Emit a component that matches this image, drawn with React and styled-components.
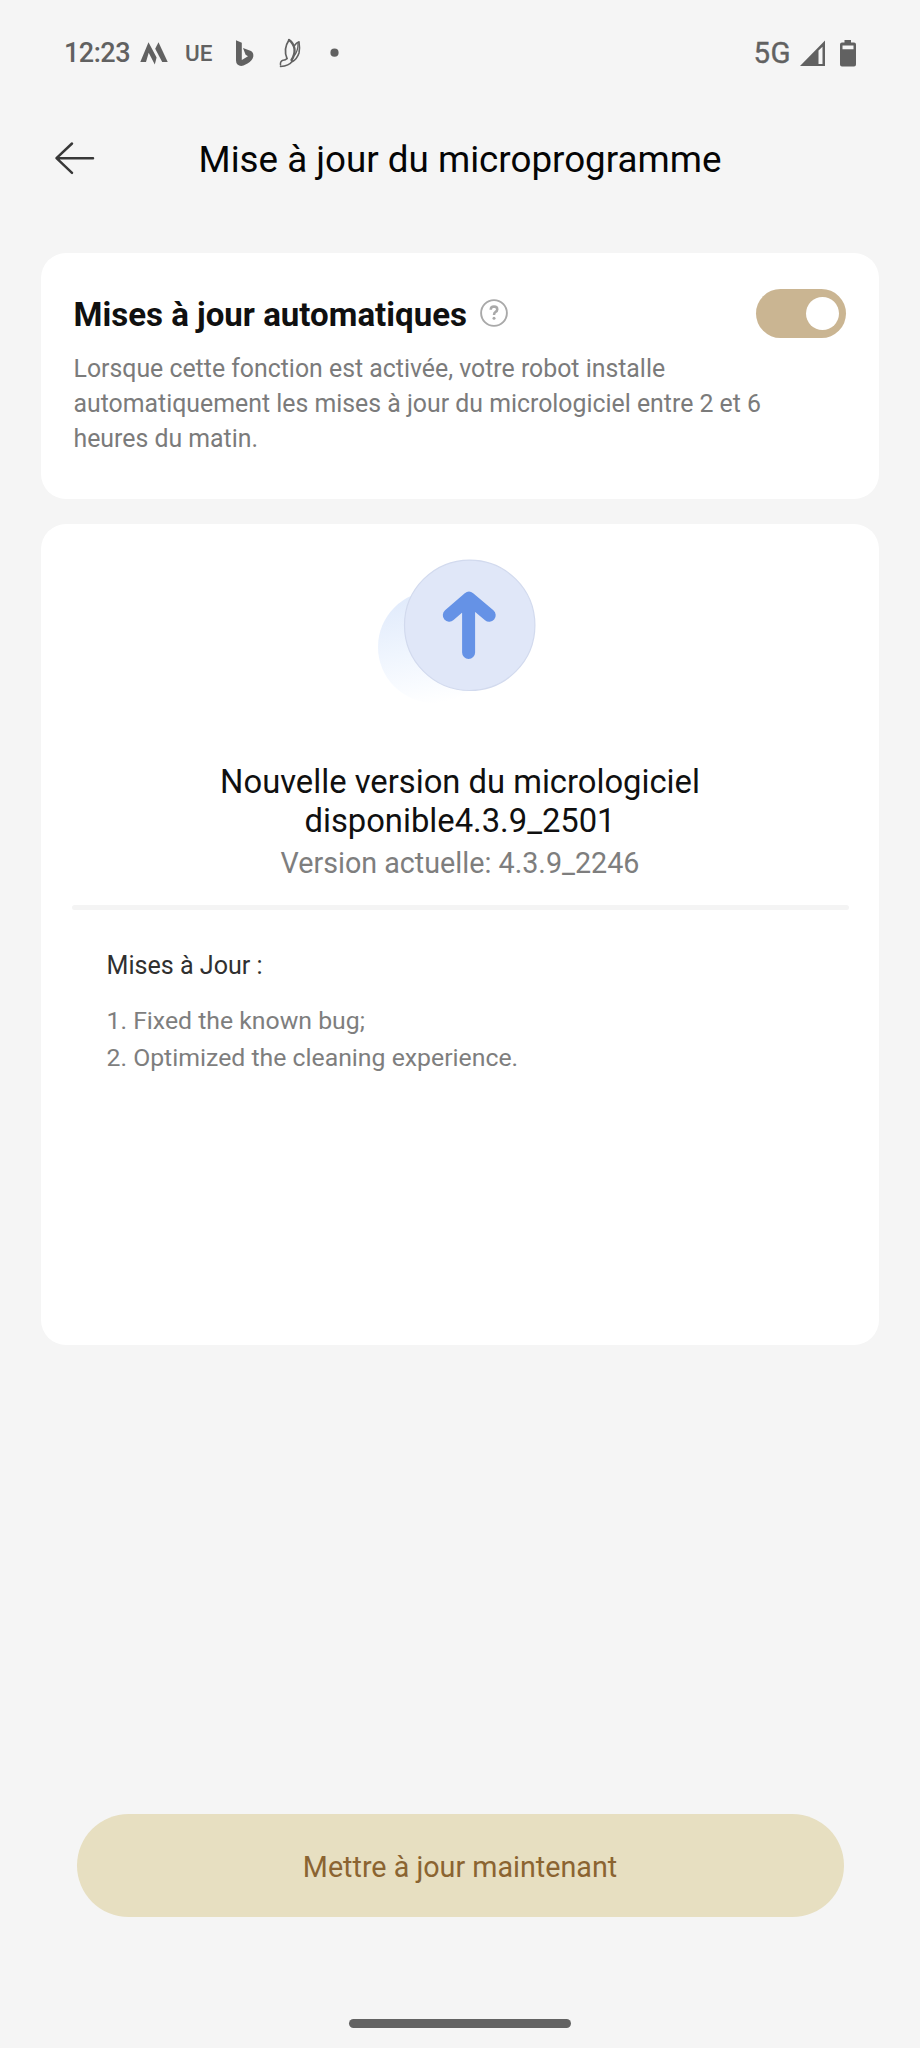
import React from "react";
import styled, { createGlobalStyle } from "styled-components";

const GlobalStyle = createGlobalStyle`
  * { box-sizing: border-box; }
  html, body { margin: 0; background: #f5f5f5; }
  body { font-family: Roboto, "Liberation Sans", sans-serif; }
  h1, h2, p { margin: 0; font-weight: 400; }
`;

const Screen = styled.main`
  display: flex;
  flex-direction: column;
  width: 920px;
  height: 2048px;
  background: #f5f5f5;
  overflow: hidden;
`;

const StatusBar = styled.div`
  display: flex;
  justify-content: space-between;
  align-items: center;
  height: 106px;
  padding: 0 63px 0 64px;
  color: #616161;
`;

const StatusGroup = styled.div`
  display: flex;
  align-items: center;
`;

const Clock = styled.span`
  width: 76px;
  font-size: 27px;
  font-weight: 500;
  letter-spacing: -0.5px;
`;

const AppBadge = styled.span`
  width: 50.5px;
  margin-left: 17px;
  font-size: 22.5px;
  font-weight: 500;
`;

const Network = styled.span`
  width: 46.5px;
  font-size: 29.5px;
  letter-spacing: 0.5px;
  -webkit-text-stroke: 0.35px #616161;
`;

const Header = styled.header`
  display: grid;
  grid-template-columns: 46px 1fr 46px;
  align-items: center;
  height: 106px;
  padding: 0 52px;
`;

const BackButton = styled.button`
  display: flex;
  padding: 0;
  border: 0;
  background: none;
`;

const PageTitle = styled.h1`
  padding-top: 2px;
  color: #050505;
  font-size: 36.75px;
  line-height: 44px;
  text-align: center;
  white-space: nowrap;
`;

const Card = styled.section`
  margin: ${(p) => p.$top}px 41px 0;
  height: ${(p) => p.$height}px;
  border-radius: 25px;
  background: #fff;
`;

const AutoCard = styled(Card)`
  padding: 35px 33px 0 32.5px;
`;

const SettingRow = styled.div`
  display: flex;
  align-items: center;
  height: 50px;
`;

const SettingTitle = styled.h2`
  padding: 3px 12px 0 0;
  color: #101010;
  font-size: 33.05px;
  font-weight: 700;
  line-height: 44px;
  white-space: nowrap;
`;

const Toggle = styled.button`
  display: flex;
  justify-content: flex-end;
  align-items: center;
  width: 90px;
  height: 49px;
  margin-left: auto;
  padding: 0 7.5px;
  border: 0;
  border-radius: 25px;
  background: #cab592;
`;

const Knob = styled.span`
  width: 33px;
  height: 33px;
  border-radius: 50%;
  background: #fff;
`;

const Description = styled.p`
  width: 710px;
  margin-top: 13px;
  color: #7b7b7b;
  font-size: 24.85px;
  line-height: 35px;
`;

const UpdateCard = styled(Card)`
  display: flex;
  flex-direction: column;
  align-items: center;
  padding-top: 16px;
`;

const VersionTitle = styled.h2`
  width: 540px;
  margin-top: 43px;
  color: #101010;
  font-size: 32.75px;
  line-height: 39px;
  text-align: center;
`;

const CurrentVersion = styled.p`
  color: #7e7e7e;
  font-size: 28.7px;
  line-height: 45px;
`;

const Divider = styled.hr`
  width: 777px;
  height: 5px;
  margin: 19px 0 0;
  border: 0;
  border-radius: 3px;
  background: #f4f4f4;
`;

const Notes = styled.div`
  align-self: stretch;
  padding: 38px 65.5px 0;
`;

const NotesTitle = styled.h2`
  color: #303030;
  font-size: 25.1px;
  line-height: 36px;
`;

const NotesList = styled.div`
  margin-top: 18px;
  color: #7e7e7e;
  font-size: 24.8px;
  line-height: 37px;
`;

const Footer = styled.footer`
  display: flex;
  flex-direction: column;
  align-items: center;
  margin-top: auto;
  padding-bottom: 20px;
`;

const UpdateButton = styled.button`
  width: 767px;
  height: 103px;
  padding: 2px 0 0;
  border: 0;
  border-radius: 52px;
  background: #e7dfc1;
  color: #8b6431;
  font-family: inherit;
  font-size: 28.7px;
`;

const HomeBar = styled.div`
  width: 222px;
  height: 9px;
  margin-top: 102px;
  border-radius: 5px;
  background: #636363;
`;

const NotificationIcons = () => (
  <svg width="110" height="34" viewBox="236 36 110 34" fill="#616161">
    <path d="M236 40.300L241.800 42.800V60L248 56.200L245.600 54.800L243 48L251 51Q253.800 52.500 253.300 56.500Q252.500 60.500 247.500 63.500L243.500 65.500Q240 66.800 237.500 64.500Q236 63 236 60.500Z" />
    <g fill="none" stroke="#616161" strokeLinejoin="round" strokeLinecap="round">
      <path d="M287 58.500Q283 49 289 40" strokeWidth="1.700" />
      <path d="M289 40Q293.500 43 294.500 49Q295 55 291.500 60" strokeWidth="2.300" />
      <path d="M294.500 45.500Q296.500 42.500 299 41.800Q300 48 299 53Q297 59 292.500 61.500" strokeWidth="1.600" />
      <path d="M298 43.500Q298.300 50 294.500 55.500" strokeWidth="1.300" />
      <path d="M287 58.500Q285.500 60.300 283 60.200Q280 61 280.500 65" strokeWidth="1.500" />
      <path d="M280.500 66.500Q289 66 292.500 61" strokeWidth="1.500" />
    </g>
    <circle cx="334.500" cy="52.700" r="4.100" />
  </svg>
);

const WingIcon = () => (
  <svg width="28" height="24" viewBox="140 41 28 24" fill="#616161">
    <path d="M140.300 62L148.500 42.300L156.600 57.500L154.800 64.500L148.700 52.800L146 62Z" />
    <path d="M158.500 42.300L167.700 62H162.200L155.200 48.800Z" />
  </svg>
);

const SignalIcons = () => (
  <svg width="57" height="30" viewBox="800 37 57 30" fill="#616161">
    <path fillRule="evenodd" d="M800 65L825 39.500V65ZM818.500 49.500V63H822.500V45.800Z" />
    <path fillRule="evenodd" d="M844.500 39H851V41.500H854Q856 41.500 856 43.500V63.500Q856 65.500 854 65.500H842Q840 65.500 840 63.500V43.500Q840 41.500 842 41.500H844.500ZM842.500 44.500V48.200H853.500V44.500Z" />
  </svg>
);

const BackIcon = () => (
  <svg width="46" height="36" viewBox="52 141 46 36" fill="none" stroke="#383838" strokeWidth="2.500" strokeLinecap="round" strokeLinejoin="round">
    <path d="M72 143.500L56.500 158.200L72 172.800M57 158.200H93" />
  </svg>
);

const HelpIcon = () => (
  <svg width="30" height="30" viewBox="0 0 30 30" fill="none" stroke="#a9a9a9">
    <circle cx="15" cy="15" r="12.900" strokeWidth="1.900" />
    <path d="M11.700 11.800Q11.800 8.600 15 8.600Q18.300 8.700 18.300 11.400Q18.200 13 16.600 13.900Q15 14.800 15 17" strokeWidth="2.500" />
    <circle cx="15" cy="20.200" r="1.500" fill="#a9a9a9" stroke="none" />
  </svg>
);

const UpdateIcon = () => (
  <svg width="220" height="180" viewBox="350 540 220 180">
    <defs>
      <linearGradient id="shade" x1="0.350" y1="0" x2="0.550" y2="1">
        <stop offset="0" stopColor="#e0eafb" />
        <stop offset="0.500" stopColor="#eff5fe" />
        <stop offset="0.850" stopColor="#fafcff" />
        <stop offset="1" stopColor="#ffffff" />
      </linearGradient>
    </defs>
    <circle cx="434" cy="647" r="56" fill="url(#shade)" />
    <circle cx="469.700" cy="625.300" r="65.200" fill="#e0e7f8" stroke="#d2daee" strokeWidth="1.200" />
    <path d="M449.300 615.200L469 598.200L489.200 615.200M468.600 600V652.500" fill="none" stroke="#6592e6" strokeWidth="13" strokeLinecap="round" strokeLinejoin="round" />
  </svg>
);

export default function App() {
  return (
    <Screen>
      <GlobalStyle />
      <StatusBar>
        <StatusGroup>
          <Clock>12:23</Clock>
          <WingIcon />
          <AppBadge>UE</AppBadge>
          <NotificationIcons />
        </StatusGroup>
        <StatusGroup>
          <Network>5G</Network>
          <SignalIcons />
        </StatusGroup>
      </StatusBar>
      <Header>
        <BackButton aria-label="Retour"><BackIcon /></BackButton>
        <PageTitle>Mise à jour du microprogramme</PageTitle>
      </Header>
      <AutoCard $top={41} $height={246}>
        <SettingRow>
          <SettingTitle>Mises à jour automatiques</SettingTitle>
          <HelpIcon />
          <Toggle role="switch" aria-checked="true"><Knob /></Toggle>
        </SettingRow>
        <Description>
          Lorsque cette fonction est activée, votre robot installe automatiquement les mises à jour du micrologiciel entre 2 et 6 heures du matin.
        </Description>
      </AutoCard>
      <UpdateCard $top={25} $height={821}>
        <UpdateIcon />
        <VersionTitle>Nouvelle version du micrologiciel disponible4.3.9_2501</VersionTitle>
        <CurrentVersion>Version actuelle: 4.3.9_2246</CurrentVersion>
        <Divider />
        <Notes>
          <NotesTitle>Mises à Jour :</NotesTitle>
          <NotesList>
            <p>1. Fixed the known bug;</p>
            <p>2. Optimized the cleaning experience.</p>
          </NotesList>
        </Notes>
      </UpdateCard>
      <Footer>
        <UpdateButton>Mettre à jour maintenant</UpdateButton>
        <HomeBar />
      </Footer>
    </Screen>
  );
}
